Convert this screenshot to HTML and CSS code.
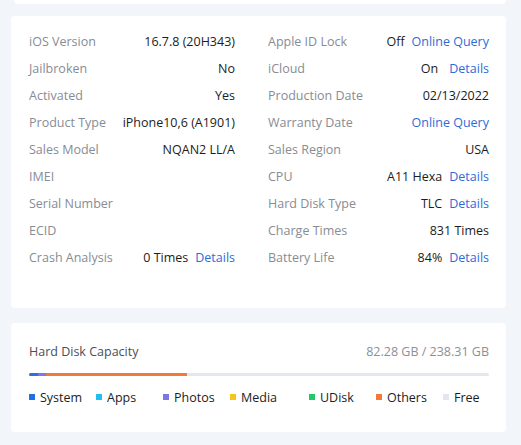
FILE: index.html
```html
<!DOCTYPE html>
<html>
<head>
<meta charset="utf-8">
<link rel="stylesheet" href="styles.css">
</head>
<body>
<div class="page">
  <div class="stub"></div>
  <div class="card info">
    <div class="grid">
      <div class="col left">
        <div class="row"><span class="label">iOS Version</span><span class="val">16.7.8 (20H343)</span></div>
        <div class="row"><span class="label">Jailbroken</span><span class="val">No</span></div>
        <div class="row"><span class="label">Activated</span><span class="val">Yes</span></div>
        <div class="row"><span class="label">Product Type</span><span class="val">iPhone10,6 (A1901)</span></div>
        <div class="row"><span class="label">Sales Model</span><span class="val">NQAN2 LL/A</span></div>
        <div class="row"><span class="label">IMEI</span><span class="val"></span></div>
        <div class="row"><span class="label">Serial Number</span><span class="val"></span></div>
        <div class="row"><span class="label">ECID</span><span class="val"></span></div>
        <div class="row"><span class="label">Crash Analysis</span><span class="val">0 Times<a class="link">Details</a></span></div>
      </div>
      <div class="col right">
        <div class="row"><span class="label">Apple ID Lock</span><span class="val">Off<a class="link">Online Query</a></span></div>
        <div class="row"><span class="label">iCloud</span><span class="val">On<a class="link wide">Details</a></span></div>
        <div class="row"><span class="label">Production Date</span><span class="val">02/13/2022</span></div>
        <div class="row"><span class="label">Warranty Date</span><span class="val"><a class="link solo">Online Query</a></span></div>
        <div class="row"><span class="label">Sales Region</span><span class="val">USA</span></div>
        <div class="row"><span class="label">CPU</span><span class="val">A11 Hexa<a class="link">Details</a></span></div>
        <div class="row"><span class="label">Hard Disk Type</span><span class="val">TLC<a class="link">Details</a></span></div>
        <div class="row"><span class="label">Charge Times</span><span class="val">831 Times</span></div>
        <div class="row"><span class="label">Battery Life</span><span class="val">84%<a class="link">Details</a></span></div>
      </div>
    </div>
  </div>
  <div class="card disk">
    <div class="disk-head">
      <span class="disk-title">Hard Disk Capacity</span>
      <span class="disk-size">82.28 GB / 238.31 GB</span>
    </div>
    <div class="bar">
      <div class="seg sys" style="width:9px"></div>
      <div class="seg pho" style="width:8px"></div>
      <div class="seg oth" style="width:141px"></div>
    </div>
    <div class="legend">
      <div class="item"><i class="sq sys"></i>System</div>
      <div class="item"><i class="sq app"></i>Apps</div>
      <div class="item"><i class="sq pho"></i>Photos</div>
      <div class="item media"><i class="sq med"></i>Media</div>
      <div class="item"><i class="sq udk"></i>UDisk</div>
      <div class="item"><i class="sq oth"></i>Others</div>
      <div class="item"><i class="sq fre"></i>Free</div>
    </div>
  </div>
</div>
</body>
</html>
```

FILE: styles.css
```css
* { box-sizing: border-box; }
html, body {
  margin: 0;
  padding: 0;
  background: #f2f5f9;
  font-family: "Open Sans", "Noto Sans", sans-serif;
  font-size: 12.5px;
  color: #1f2329;
}
.page {
  width: 521px;
  height: 445px;
  padding: 0 15px 0 11px;
  display: flex;
  flex-direction: column;
}
.stub {
  height: 4px;
  background: #fff;
  border-radius: 0 0 4px 4px;
  margin-left: 3px;
}
.card {
  background: #fff;
  border-radius: 4px;
}
.info {
  margin-top: 12px;
  height: 292px;
  padding: 12px 17px 0 18px;
}
.grid {
  display: grid;
  grid-template-columns: 206px 221px;
  column-gap: 33px;
}
.row {
  height: 27px;
  display: flex;
  align-items: center;
  justify-content: space-between;
  white-space: nowrap;
}
.label { color: #878c95; }
.val { color: #1a1d22; }
.link {
  color: #2f6bd8;
  margin-left: 7px;
}
.link.wide { margin-left: 11px; }
.link.solo { margin-left: 0; }
.disk {
  margin-top: 15px;
  height: 109px;
  padding: 18px 17px 0 18px;
}
.disk-head {
  display: flex;
  justify-content: space-between;
  align-items: center;
  height: 20px;
}
.disk-title { color: #4a4f57; }
.disk-size { color: #8b9099; }
.bar {
  margin-top: 12px;
  height: 3px;
  background: #e3e8ee;
  border-radius: 2px;
  display: flex;
  overflow: hidden;
}
.seg { height: 100%; flex-shrink: 0; }
.seg.sys { background: #2f6fe0; }
.seg.pho { background: #7b78e8; }
.seg.oth { background: #f07a3a; }
.legend {
  margin-top: 12px;
  display: flex;
  height: 18px;
  align-items: center;
}
.item {
  width: 67px;
  flex-shrink: 0;
  display: flex;
  align-items: center;
  color: #1a1d22;
  white-space: nowrap;
}
.item.media { width: 79px; }
.sq {
  width: 6px;
  height: 6px;
  margin-right: 5px;
  flex-shrink: 0;
  display: inline-block;
}
.sq.sys { background: #1f6fe5; }
.sq.app { background: #1ec0f0; }
.sq.pho { background: #7a76e6; }
.sq.med { background: #f5c518; }
.sq.udk { background: #22c96b; }
.sq.oth { background: #f47a3a; }
.sq.fre { background: #e3e6ee; }
```
